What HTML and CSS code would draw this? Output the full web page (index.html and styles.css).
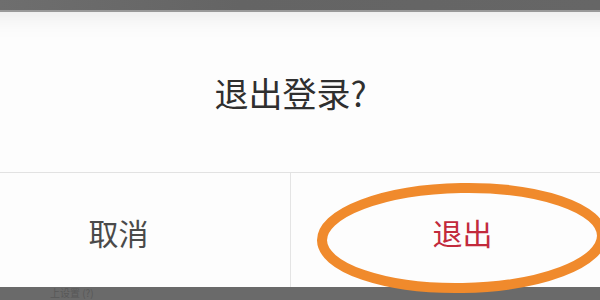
FILE: index.html
```
<!DOCTYPE html>
<html lang="zh-CN">
<head>
  <meta charset="UTF-8" />
  <meta name="viewport" content="width=device-width, initial-scale=1.0" />
  <title>退出登录</title>
  <link rel="stylesheet" href="styles.css">
</head>
<body>
  <div class="screen">
    <div class="top-band"></div>
    <div class="dialog">
      <div class="dialog-title">退出登录?</div>
      <div class="dialog-actions">
        <div class="action cancel">取消</div>
        <div class="action confirm">退出</div>
      </div>
    </div>
    <div class="bottom-band"><span>上设置 (?)</span></div>

    <!-- 手画的圈 -->
    <svg class="circle-mark" width="300" height="124" viewBox="0 0 300 124">
      <ellipse cx="146" cy="58" rx="140" ry="50" fill="none" stroke="#f08a2c" stroke-width="10" transform="rotate(-1 146 58)" />
    </svg>
  </div>
</body>
</html>
```

FILE: styles.css
```
body {
  margin: 0;
  background: #686868;
  font-family: "Noto Sans CJK SC", "Noto Sans", sans-serif;
  overflow: hidden;
}
.screen {
  position: relative;
  width: 600px;
  height: 300px;
  display: flex;
  flex-direction: column;
  overflow: hidden;
}
.top-band {
  height: 10px;
  background: linear-gradient(90deg, #6e6e6e, #646464 40%, #666 100%);
  border-bottom: 2px solid #9a9a9a;
  flex-shrink: 0;
}
.dialog {
  width: 687px;
  margin-left: -53px;
  height: 275px;
  background: #fdfdfd;
  display: flex;
  flex-direction: column;
  flex-shrink: 0;
  box-shadow: inset 0 18px 30px -20px rgba(0,0,0,0.12);
}
.dialog-title {
  height: 160px;
  display: flex;
  align-items: center;
  justify-content: center;
  font-size: 34px;
  color: #2f2f2f;
  border-bottom: 1px solid #e2e2e2;
}
.dialog-actions {
  flex: 1;
  display: flex;
}
.action {
  flex: 1;
  display: flex;
  align-items: center;
  justify-content: center;
  font-size: 30px;
  padding-top: 4px;
}
.cancel {
  color: #4a4a4a;
  border-right: 1px solid #e4e4e4;
}
.confirm {
  color: #c22a3c;
}
.bottom-band {
  flex: 1;
  background: #6a6a6a;
  padding-left: 50px;
}
.bottom-band span {
  display: block;
  font-size: 10px;
  line-height: 12px;
  color: #585858;
}
.circle-mark {
  position: absolute;
  left: 316px;
  top: 180px;
}
```
